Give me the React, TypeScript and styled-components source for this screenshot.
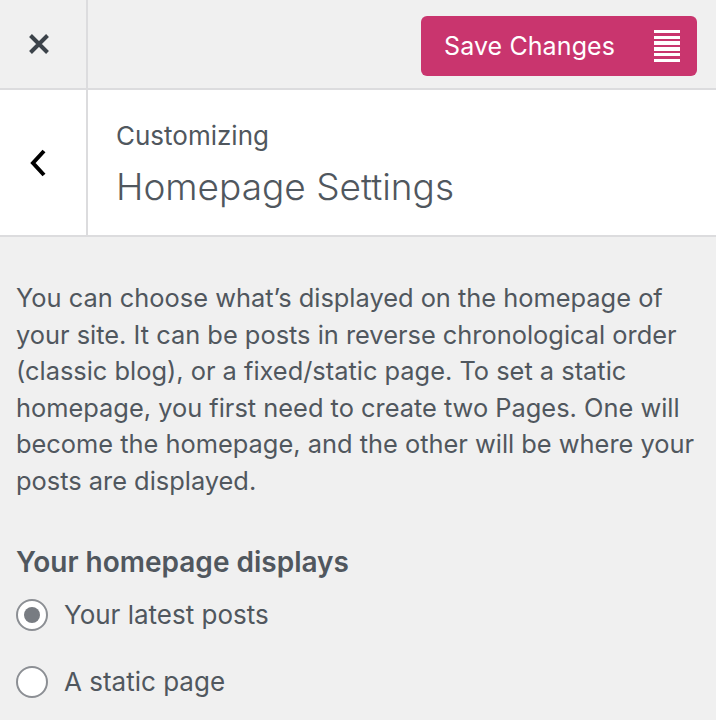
import React from "react";
import styled, { createGlobalStyle } from "styled-components";

const GlobalStyle = createGlobalStyle`
    html, body {
        margin: 0;
        padding: 0;
        background: #f0f0f0;
    }
    body {
        font-family: Inter, "Noto Sans", sans-serif;
        color: #50575e;
    }
`;

const options = [
    { id: "posts", label: "Your latest posts", checked: true },
    { id: "page", label: "A static page", checked: false },
];

export default function App() {
    return (
        <SPanel>
            <GlobalStyle />
            <STopBar>
                <SCloseButton aria-label="Close">
                    <svg width="22" height="22" viewBox="0 0 22 22">
                        <path d="M2.5 2.5 L19.5 19.5 M19.5 2.5 L2.5 19.5" stroke="#3c434a" strokeWidth="4" />
                    </svg>
                </SCloseButton>
                <STopActions>
                    <SSaveButton>
                        <span>Save Changes</span>
                        <SStripes>
                            {[0, 1, 2, 3, 4, 5].map((i) => (
                                <SStripe key={i} />
                            ))}
                        </SStripes>
                    </SSaveButton>
                </STopActions>
            </STopBar>

            <SSectionHeader>
                <SBackButton aria-label="Back">
                    <svg width="18" height="28" viewBox="0 0 18 28">
                        <path d="M15 2 L4 14 L15 26" fill="none" stroke="#000" strokeWidth="4" />
                    </svg>
                </SBackButton>
                <STitleBlock>
                    <SCrumb>Customizing</SCrumb>
                    <STitle>Homepage Settings</STitle>
                </STitleBlock>
            </SSectionHeader>

            <SContent>
                <SDescription>
                    You can choose what’s displayed on the homepage of your site. It can be posts in reverse
                    chronological order (classic blog), or a fixed/static page. To set a static homepage, you
                    first need to create two Pages. One will become the homepage, and the other will be where
                    your posts are displayed.
                </SDescription>

                <SControlTitle>Your homepage displays</SControlTitle>
                <SRadioList>
                    {options.map((opt) => (
                        <SRadioRow key={opt.id}>
                            <SRadio $checked={opt.checked} />
                            <SRadioLabel>{opt.label}</SRadioLabel>
                        </SRadioRow>
                    ))}
                </SRadioList>
            </SContent>
        </SPanel>
    );
}

const SPanel = styled.div`
    width: 716px;
    min-height: 720px;
    background: #f0f0f0;
    overflow: hidden;
`;

const STopBar = styled.div`
    display: flex;
    height: 88px;
    border-bottom: 2px solid #dcdcde;
    background: #f0f0f0;
`;

const SCloseButton = styled.div`
    width: 88px;
    box-sizing: border-box;
    border-right: 2px solid #dcdcde;
    display: flex;
    align-items: center;
    justify-content: center;
    padding: 0 8px 0 0;
`;

const STopActions = styled.div`
    flex: 1;
    display: flex;
    justify-content: flex-end;
    align-items: flex-start;
    padding: 16px 19px 0 0;
`;

const SSaveButton = styled.div`
    width: 276px;
    height: 60px;
    box-sizing: border-box;
    background: #c9356e;
    border-radius: 6px;
    display: flex;
    align-items: center;
    justify-content: space-between;
    padding: 0 17px 0 23px;
    color: #fff;
    font-size: 25px;
    letter-spacing: 0.1px;
`;

const SStripes = styled.div`
    display: flex;
    flex-direction: column;
    gap: 2.4px;
    width: 26px;
`;

const SStripe = styled.div`
    height: 3.4px;
    background: #fff;
`;

const SSectionHeader = styled.div`
    display: flex;
    height: 145px;
    background: #fff;
    border-bottom: 2px solid #dcdcde;
`;

const SBackButton = styled.div`
    width: 88px;
    border-right: 2px solid #dcdcde;
    display: flex;
    align-items: center;
    justify-content: center;
    padding-right: 10px;
    box-sizing: border-box;
`;

const STitleBlock = styled.div`
    display: flex;
    flex-direction: column;
    justify-content: center;
    padding: 5px 0 0 28px;
`;

const SCrumb = styled.div`
    font-size: 26px;
    line-height: 34px;
    color: #50575e;
`;

const STitle = styled.div`
    margin-top: 9px;
    font-size: 37px;
    font-weight: 300;
    line-height: 50px;
    color: #50575e;
`;

const SContent = styled.div`
    padding: 43px 14px 0 16px;
`;

const SDescription = styled.p`
    margin: 0;
    font-size: 25.4px;
    line-height: 36.6px;
    color: #50575e;
`;

const SControlTitle = styled.div`
    margin-top: 44px;
    font-size: 28px;
    font-weight: 600;
    line-height: 36px;
    color: #50575e;
`;

const SRadioList = styled.div`
    display: flex;
    flex-direction: column;
    gap: 31px;
    margin-top: 17px;
`;

const SRadioRow = styled.div`
    display: flex;
    align-items: center;
    gap: 16px;
`;

const SRadio = styled.div<{ $checked: boolean }>`
    width: 32px;
    height: 32px;
    box-sizing: border-box;
    border-radius: 50%;
    border: 2px solid #8c8f94;
    background: #fff;
    display: flex;
    align-items: center;
    justify-content: center;

    &::after {
        content: "";
        width: 16px;
        height: 16px;
        border-radius: 50%;
        background: ${({ $checked }) => ($checked ? "#787c82" : "transparent")};
    }
`;

const SRadioLabel = styled.span`
    font-size: 26px;
    line-height: 36px;
    color: #50575e;
`;
